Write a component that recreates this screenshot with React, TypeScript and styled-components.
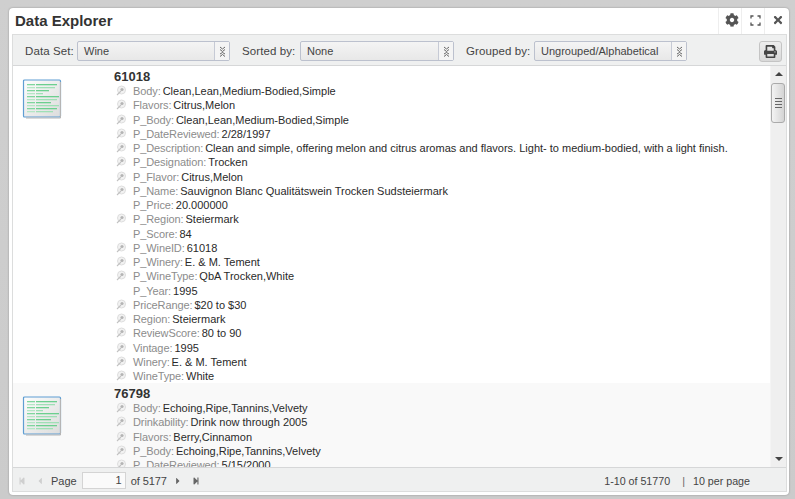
import React from "react";
import styled, { createGlobalStyle } from "styled-components";
import { FaCog, FaTimes, FaPrint, FaStepBackward, FaStepForward, FaCaretLeft, FaCaretRight } from "react-icons/fa";

const Global = createGlobalStyle`
  html, body { margin: 0; padding: 0; height: 100%; overflow: hidden; }
  body { background: linear-gradient(#cfcfcf, #cbcbcb); font-family: "Liberation Sans", Arial, sans-serif; }
  * { box-sizing: border-box; }
`;

const Page = styled.div`
  width: 795px; height: 499px; padding: 8px 6px 4px 9px;
`;
const Win = styled.div`
  width: 780px; height: 487px; background: #fff; border-radius: 4px;
  box-shadow: 0 0 2px #8a8a8a; padding: 0 2px 3px 3px;
  display: flex; flex-direction: column;
`;
const TitleBar = styled.div`
  height: 26px; flex: none; display: flex; align-items: stretch;
`;
const Title = styled.div`
  flex: 1; font-size: 15px; font-weight: bold; color: #333; line-height: 25px; padding-left: 3px;
`;
const TitleBtn = styled.div`
  width: 23px; display: flex; align-items: center; justify-content: center; color: #555;
  border-left: 1px solid #eee; padding: 0 0 2px 4px;
`;
const Inner = styled.div`
  flex: 1; min-height: 0; display: flex; flex-direction: column;
  border: 1px solid #dcdddd;
`;
const Toolbar = styled.div`
  height: 31px; flex: none; background: #eff0f0; border-bottom: 1px solid #d6d7d8;
  display: flex; align-items: center; padding: 2px 0 0 12px; color: #444; font-size: 11.5px;
`;
const Label = styled.span<{ $w: number }>`
  width: ${p => p.$w}px; flex: none; white-space: nowrap; letter-spacing: 0.1px;
`;
const Select = styled.div<{ $w: number }>`
  width: ${p => p.$w}px; height: 20px; flex: none; display: flex; margin-right: 12px;
  border: 1px solid #bcc1ce; border-radius: 2px; background: linear-gradient(#f4f4f4, #e8e8e8);
  font-size: 11px; color: #444; line-height: 18px;
`;
const SelText = styled.div`flex: 1; padding-left: 6px;`;
const SelArrow = styled.div`
  width: 15px; border-left: 1px solid #c6cad5; display: flex; align-items: center; justify-content: center;
  background: #f4f4f4;
`;
const PrintBtn = styled.div`
  width: 23px; height: 21px; margin-left: auto; margin-right: 4px; border: 1px solid #c4c4c4; border-radius: 3px;
  background: linear-gradient(#eee, #d8d8d8); color: #444; display: flex; align-items: center; justify-content: center;
`;
const Body = styled.div`
  flex: 1; min-height: 0; display: flex;
`;
const List = styled.div`
  flex: 1; min-width: 0; overflow: hidden;
`;
const Row = styled.div<{ $alt?: boolean }>`
  display: flex; height: 317px; background: ${p => (p.$alt ? "#f9f9f9" : "#fff")}; padding-left: 9px;
`;
const Thumb = styled.div`
  width: 40px; flex: none; padding-top: 13px;
`;
const Content = styled.div`
  margin-left: 52px; padding-top: 3px;
`;
const Heading = styled.div`
  font-size: 13px; font-weight: bold; color: #333; line-height: 15px;
`;
const Field = styled.div`
  display: flex; align-items: center; height: 14.25px; font-size: 11px; white-space: nowrap; color: #2a2a2a;
`;
const PinSlot = styled.span`
  width: 18px; flex: none; margin-left: 1px; display: flex; align-items: center;
`;
const Key = styled.span`color: #8c8c8c; margin-right: 2px; letter-spacing: -0.1px;`;
const Scroll = styled.div`
  width: 16px; flex: none; background: #efefef; display: flex; flex-direction: column; align-items: center;
  border-left: 1px solid #f4f4f4;
`;
const ArrowUp = styled.div`
  margin-top: 6px; width: 0; height: 0; border: 4px solid transparent; border-top: 0; border-bottom: 4px solid #444;
`;
const ScrollThumb = styled.div`
  margin-top: 7px; width: 14px; height: 40px; margin-left: -1px; border: 1px solid #aaa; border-radius: 3px;
  background: linear-gradient(90deg, #f3f3f3, #d4d4d4); display: flex; flex-direction: column; gap: 2px;
  align-items: center; justify-content: center;
`;
const Grip = styled.div`width: 7px; height: 1px; background: #666;`;
const ArrowDown = styled.div`
  margin-top: auto; margin-bottom: 6px; width: 0; height: 0; border: 4px solid transparent; border-bottom: 0; border-top: 4px solid #444;
`;
const Footer = styled.div`
  height: 24px; flex: none; background: #eff0f0; border-top: 1px solid #d6d7d8;
  display: flex; align-items: center; padding: 2px 0 0 5px; font-size: 10.7px; color: #444;
`;
const Nav = styled.span<{ $off?: boolean; $w?: number }>`
  display: flex; align-items: center; width: ${p => p.$w ?? 17}px; flex: none; color: ${p => (p.$off ? "#cfcfcf" : "#666")};
`;
const PageLabel = styled.span`margin: 0 5px 0 -1px; font-size: 11px;`;
const PageInput = styled.div`
  width: 44px; height: 17px; border: 1px solid #d4d4d4; background: #fafafa; text-align: right;
  padding-right: 3px; line-height: 15px; margin-right: 5px; font-size: 11px;
`;
const Of = styled.span`margin-right: 6px; font-size: 11px; letter-spacing: -0.1px;`;
const Summary = styled.span`margin-left: auto; margin-right: 36px; white-space: nowrap;`;
const Sep = styled.span`margin: 0 8px 0 12px; color: #666;`;

const Chevrons = () => (
  <svg width="7" height="11" viewBox="0 0 7 11" fill="none" stroke="#666" strokeWidth="1">
    <path d="M1 1 3.5 3 6 1M1 3.5 3.5 5.5 6 3.5" />
    <path d="M1 8 3.5 6.5 6 8M1 10.5 3.5 8.5 6 10.5" />
  </svg>
);
const Expand = () => (
  <svg width="11" height="11" viewBox="0 0 11 11" fill="none" stroke="#555" strokeWidth="1.3">
    <path d="M1 3.5V1H3.5M10 3.5V1H7.5M1 7.5V10H3.5M10 7.5V10H7.5" />
  </svg>
);
const Pin = () => (
  <svg width="12" height="12" viewBox="0 0 12 12">
    <circle cx="6.5" cy="5" r="4" fill="#f2f2f2" stroke="#dedede" strokeWidth="1" />
    <circle cx="7" cy="4.5" r="1.6" fill="#b4b4b4" />
    <path d="M6 6 2 10" stroke="#c2c2c2" strokeWidth="1.1" />
  </svg>
);
const DocIcon = () => (
  <svg width="40" height="40" viewBox="0 0 40 40">
    <defs>
      <linearGradient id="docBg" x1="0" y1="0" x2="1" y2="1">
        <stop offset="0" stopColor="#fdfdfd" />
        <stop offset="1" stopColor="#dcdcdc" />
      </linearGradient>
    </defs>
    <rect x="1.5" y="1" width="37" height="37" fill="url(#docBg)" stroke="#5f9ed3" strokeWidth="1.2" rx="1" />
    <path d="M38.5 3V39H4" stroke="#b5b5b5" fill="none" />
    {[31, 29, 23, 17, 33, 31, 25, 33, 31, 27].map((w, i) => (
      <g key={i}>
        <rect x="5" y={5 + i * 3} width="8" height="1.3" fill={i % 2 ? "#b5e6c6" : "#7fd69e"} />
        <rect x="14" y={5 + i * 3} width={w - 10} height="1.3" fill={i % 2 ? "#9fe0b6" : "#6ccf8f"} />
      </g>
    ))}
  </svg>
);

type F = [string, string, boolean?];
const first: F[] = [
  ["Body", "Clean,Lean,Medium-Bodied,Simple", true],
  ["Flavors", "Citrus,Melon", true],
  ["P_Body", "Clean,Lean,Medium-Bodied,Simple", true],
  ["P_DateReviewed", "2/28/1997", true],
  ["P_Description", "Clean and simple, offering melon and citrus aromas and flavors. Light- to medium-bodied, with a light finish.", true],
  ["P_Designation", "Trocken", true],
  ["P_Flavor", "Citrus,Melon", true],
  ["P_Name", "Sauvignon Blanc Qualitätswein Trocken Sudsteiermark", true],
  ["P_Price", "20.000000", false],
  ["P_Region", "Steiermark", true],
  ["P_Score", "84", false],
  ["P_WineID", "61018", true],
  ["P_Winery", "E. & M. Tement", true],
  ["P_WineType", "QbA Trocken,White", true],
  ["P_Year", "1995", false],
  ["PriceRange", "$20 to $30", true],
  ["Region", "Steiermark", true],
  ["ReviewScore", "80 to 90", true],
  ["Vintage", "1995", true],
  ["Winery", "E. & M. Tement", true],
  ["WineType", "White", true],
];
const second: F[] = [
  ["Body", "Echoing,Ripe,Tannins,Velvety", true],
  ["Drinkability", "Drink now through 2005", true],
  ["Flavors", "Berry,Cinnamon", true],
  ["P_Body", "Echoing,Ripe,Tannins,Velvety", true],
  ["P_DateReviewed", "5/15/2000", true],
];

const Record = ({ id, fields, alt }: { id: string; fields: F[]; alt?: boolean }) => (
  <Row $alt={alt}>
    <Thumb><DocIcon /></Thumb>
    <Content>
      <Heading>{id}</Heading>
      {fields.map(([k, v, pin]) => (
        <Field key={k}>
          <PinSlot>{pin && <Pin />}</PinSlot>
          <Key>{k}:</Key>
          {v}
        </Field>
      ))}
    </Content>
  </Row>
);

const Sel = ({ w, text }: { w: number; text: string }) => (
  <Select $w={w}>
    <SelText>{text}</SelText>
    <SelArrow><Chevrons /></SelArrow>
  </Select>
);

export default function App() {
  return (
    <Page>
      <Global />
      <Win>
        <TitleBar>
          <Title>Data Explorer</Title>
          <TitleBtn><FaCog size={14} /></TitleBtn>
          <TitleBtn><Expand /></TitleBtn>
          <TitleBtn><FaTimes size={12} /></TitleBtn>
        </TitleBar>
        <Inner>
          <Toolbar>
            <Label $w={52}>Data Set:</Label>
            <Sel w={153} text="Wine" />
            <Label $w={58}>Sorted by:</Label>
            <Sel w={154} text="None" />
            <Label $w={68}>Grouped by:</Label>
            <Sel w={153} text="Ungrouped/Alphabetical" />
            <PrintBtn><FaPrint size={13} /></PrintBtn>
          </Toolbar>
          <Body>
            <List>
              <Record id="61018" fields={first} />
              <Record id="76798" fields={second} alt />
            </List>
            <Scroll>
              <ArrowUp />
              <ScrollThumb><Grip /><Grip /><Grip /><Grip /></ScrollThumb>
              <ArrowDown />
            </Scroll>
          </Body>
          <Footer>
            <Nav $off><FaStepBackward size={8} /></Nav>
            <Nav $off><FaCaretLeft size={10} /></Nav>
            <PageLabel>Page</PageLabel>
            <PageInput>1</PageInput>
            <Of>of 5177</Of>
            <Nav $w={19}><FaCaretRight size={10} /></Nav>
            <Nav><FaStepForward size={8} /></Nav>
            <Summary>1-10 of 51770<Sep>|</Sep>10 per page</Summary>
          </Footer>
        </Inner>
      </Win>
    </Page>
  );
}
